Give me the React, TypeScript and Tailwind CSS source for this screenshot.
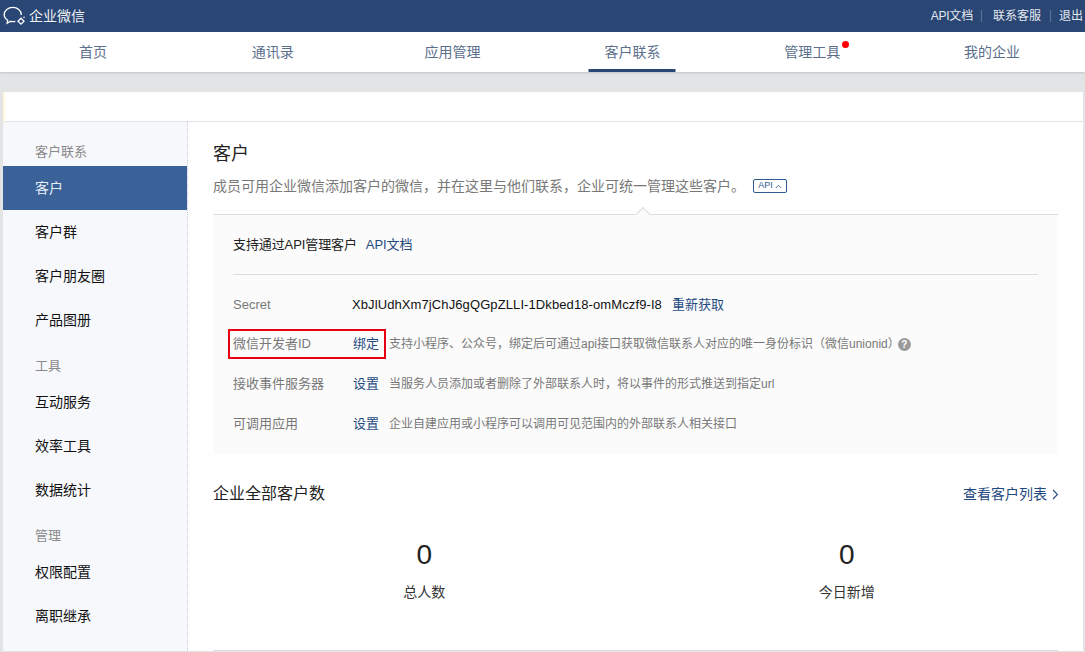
const font = { fontFamily: '"Liberation Sans", "Noto Sans CJK SC", sans-serif' };

const navItems = ['首页', '通讯录', '应用管理', '客户联系', '管理工具', '我的企业'];

const sideGroups = [
  { label: '客户联系', items: ['客户', '客户群', '客户朋友圈', '产品图册'], first: true },
  { label: '工具', items: ['互动服务', '效率工具', '数据统计'] },
  { label: '管理', items: ['权限配置', '离职继承'] },
];

const Logo = () => (
  <svg width="24" height="24" viewBox="0 0 24 24" fill="none" stroke="#fff" strokeWidth="1.3">
    <path d="M18.200 10.500C18.200 6.400 14.500 3.400 9.800 3.400S1.200 6.400 1.200 10.500c0 2.500 1.400 4.500 3.500 5.800l-.6 2.900 3.500-1.900c.9.200 1.800.3 2.800.3.500 0 1 0 1.400-.1" strokeLinecap="round" />
    <path d="M18 14.200l3 3-3 3-3-3z" />
    <circle cx="21" cy="13.200" r=".8" fill="#fff" stroke="none" />
  </svg>
);

const Row = ({ label, action, text, children }: { label: string; action: string; text: string; children?: React.ReactNode }) => (
  <div className="relative flex h-10 items-center text-[12px]">
    <div className="w-[120px] text-[13px] text-[#787878]">{label}</div>
    <a className="w-[36px] shrink-0 text-[13px] text-[#1f4a7f]">{action}</a>
    <span className="text-[#787878]">{text}</span>
    {children}
  </div>
);

export default function App() {
  return (
    <div className="h-[652px] overflow-hidden bg-[#e3e4e5]" style={font}>
      <div className="flex h-8 items-center justify-between bg-[#2a4674] pl-[3px] pr-[2px] text-white">
        <div className="flex items-center gap-[2px]">
          <Logo />
          <span className="text-[14px] text-[#eef1f5]">企业微信</span>
        </div>
        <div className="flex items-center text-[12px] text-[#e4e8ef]">
          <span className="tracking-[-0.2px]">API文档</span>
          <span className="ml-2 h-3 w-px bg-[#5c7398]" />
          <span className="ml-[11px]">联系客服</span>
          <span className="ml-[9px] h-3 w-px bg-[#5c7398]" />
          <span className="ml-2">退出</span>
        </div>
      </div>

      <div className="grid h-10 grid-cols-6 bg-white px-[3px] shadow-[0_1px_2px_rgba(0,0,0,0.15)]">
        {navItems.map((item) => (
          <div key={item} className="relative flex items-center justify-center text-[14px] text-[#5b6f8d]">
            <span className="relative">
              {item}
              {item === '管理工具' && <span className="absolute right-[-9px] top-[-1px] h-[7px] w-[7px] rounded-full bg-[#f00]" />}
            </span>
            {item === '客户联系' && <span className="absolute bottom-0 left-1/2 h-[3px] w-[87px] -translate-x-1/2 bg-[#2a4674]" />}
          </div>
        ))}
      </div>

      <div className="ml-[3px] mr-[2px] mt-5 bg-white">
        <div className="h-[30px] border-b border-l-2 border-b-[#e2e3e6] border-l-[#fdf8dc]" />
        <div className="flex">
          <aside className="w-[185px] shrink-0 border-r border-dotted border-[#c9ccd4] bg-[#f7f8fc]">
            {sideGroups.map((group) => (
              <div key={group.label} className={group.first ? 'pt-[14px]' : 'pt-2'}>
                <div className="flex h-[30px] items-center pl-8 pt-[2px] text-[13px] text-[#8a8a8a]">{group.label}</div>
                {group.items.map((item) => (
                  <div
                    key={item}
                    className={
                      item === '客户'
                        ? 'flex h-11 items-center bg-[#3a6299] pl-8 text-[14px] text-[#e8edf5]'
                        : 'flex h-11 items-center pl-8 text-[14px] text-[#111]'
                    }
                  >
                    {item}
                  </div>
                ))}
              </div>
            ))}
          </aside>

          <main className="min-w-0 flex-1 pl-[25px] pr-[25px]">
            <h1 className="pt-[21px] text-[18px] leading-[22px] text-[#222]">客户</h1>
            <div className="mt-[10px] flex h-[22px] items-center text-[14px] text-[#787878]">
              成员可用企业微信添加客户的微信，并在这里与他们联系，企业可统一管理这些客户。
              <span className="ml-2 flex h-[14px] w-[34px] items-center justify-center gap-[2px] rounded-[2px] border border-[#2f5a8f] text-[9px] text-[#2f5a8f]">
                API
                <svg width="7" height="5" viewBox="0 0 7 5" fill="none" stroke="#2f5a8f" strokeWidth="0.8">
                  <path d="M.8 4 3.500 1.200 6.200 4" />
                </svg>
              </span>
            </div>

            <div className="relative mt-[17px] border-t border-[#dcdde3] bg-[#fbfbfb] px-5 pb-[10px]">
              <span className="absolute left-[425px] top-[-6px] h-[10px] w-[10px] rotate-45 border-l border-t border-[#dcdde3] bg-[#fbfbfb]" />
              <div className="flex h-[60px] items-center border-b border-[#dcdde3] pt-px text-[13px] tracking-[-0.1px] text-[#222]">
                支持通过API管理客户
                <a className="ml-[9px] text-[#1f4a7f]">API文档</a>
              </div>
              <div className="pt-[9px]">
                <div className="flex h-10 items-center pt-[2px] text-[13px]">
                  <div className="w-[119px] text-[#787878]">Secret</div>
                  <span className="tracking-[0.1px] text-[#111]">XbJlUdhXm7jChJ6gQGpZLLI-1Dkbed18-omMczf9-I8</span>
                  <a className="ml-[10px] text-[#1f4a7f]">重新获取</a>
                </div>
                <Row label="微信开发者ID" action="绑定" text="支持小程序、公众号，绑定后可通过api接口获取微信联系人对应的唯一身份标识（微信unionid）">
                  <span className="ml-[-2px] flex h-[13px] w-[13px] items-center justify-center rounded-full bg-[#9a9a9a] text-[10px] font-bold text-white">?</span>
                  <span className="absolute left-[-5px] top-[5px] h-[30px] w-[158px] border-2 border-[#e60012]" />
                </Row>
                <Row label="接收事件服务器" action="设置" text="当服务人员添加或者删除了外部联系人时，将以事件的形式推送到指定url" />
                <Row label="可调用应用" action="设置" text="企业自建应用或小程序可以调用可见范围内的外部联系人相关接口" />
              </div>
            </div>

            <div className="mt-[26px] flex h-[28px] items-center justify-between">
              <h2 className="text-[16px] text-[#222]">企业全部客户数</h2>
              <a className="flex items-center gap-[5px] text-[14px] text-[#1f4a7f]">
                查看客户列表
                <svg width="6" height="11" viewBox="0 0 6 11" fill="none" stroke="#1f4a7f" strokeWidth="1.1">
                  <path d="M1 1l4.500 4.500L1 10" />
                </svg>
              </a>
            </div>

            <div className="mt-[30px] grid h-[113px] grid-cols-2 border-b border-[#dcdde3] text-center">
              {['总人数', '今日新增'].map((label) => (
                <div key={label}>
                  <div className="text-[28px] leading-[34px] text-[#222]">0</div>
                  <div className="mt-[10px] text-[14px] leading-5 text-[#333]">{label}</div>
                </div>
              ))}
            </div>
          </main>
        </div>
      </div>
    </div>
  );
}
